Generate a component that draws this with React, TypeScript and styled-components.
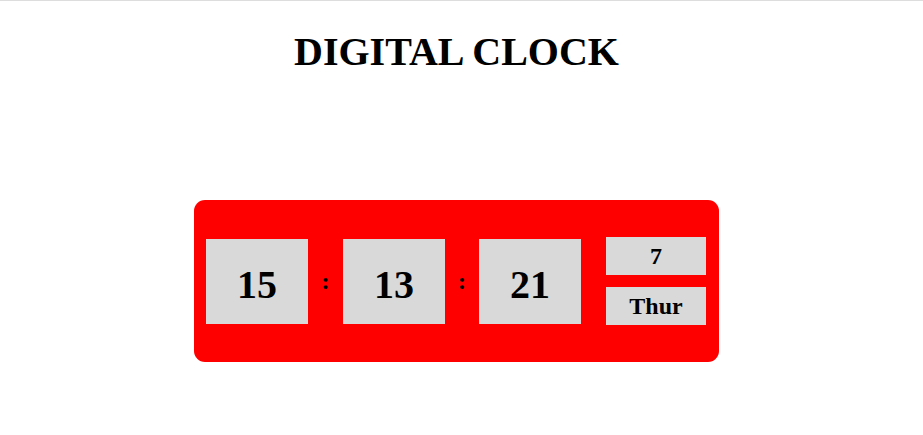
import React from "react";
import styled, { createGlobalStyle } from "styled-components";

const Global = createGlobalStyle`
  html, body { margin: 0; padding: 0; background: #fff; }
  body { font-family: "Liberation Serif", "Times New Roman", serif; }
`;

const Page = styled.div`
  border-top: 1px solid #dddddd;
  padding-right: 10px;
  display: flex;
  flex-direction: column;
  align-items: center;
`;

const Title = styled.h1`
  margin: 28px 0 0;
  font-size: 40px;
  font-weight: bold;
  line-height: 45px;
  color: #000;
`;

const Clock = styled.div`
  margin-top: 126px;
  width: 525px;
  height: 162px;
  box-sizing: border-box;
  padding: 0 13px 0 12px;
  background: #ff0000;
  border-radius: 11px;
  display: flex;
  align-items: center;
`;

const TimeBox = styled.div`
  width: 102px;
  height: 85px;
  background: #d9d9d9;
  display: flex;
  align-items: center;
  justify-content: center;
  padding-top: 6px;
  box-sizing: border-box;
  font-size: 40px;
  font-weight: bold;
  color: #000;
`;

const Colon = styled.div<{ $w: number }>`
  width: ${(p) => p.$w}px;
  text-align: center;
  font-size: 24px;
  font-weight: bold;
  color: #000;
`;

const DateCol = styled.div`
  margin-left: 25px;
  display: flex;
  flex-direction: column;
  gap: 12px;
`;

const DateBox = styled.div`
  width: 100px;
  height: 38px;
  background: #d9d9d9;
  display: flex;
  align-items: center;
  justify-content: center;
  font-size: 24px;
  font-weight: bold;
  color: #000;
`;

export default function App() {
  return (
    <>
      <Global />
      <Page>
        <Title>DIGITAL CLOCK</Title>
        <Clock>
          <TimeBox>15</TimeBox>
          <Colon $w={35}>:</Colon>
          <TimeBox>13</TimeBox>
          <Colon $w={34}>:</Colon>
          <TimeBox>21</TimeBox>
          <DateCol>
            <DateBox>7</DateBox>
            <DateBox>Thur</DateBox>
          </DateCol>
        </Clock>
      </Page>
    </>
  );
}
